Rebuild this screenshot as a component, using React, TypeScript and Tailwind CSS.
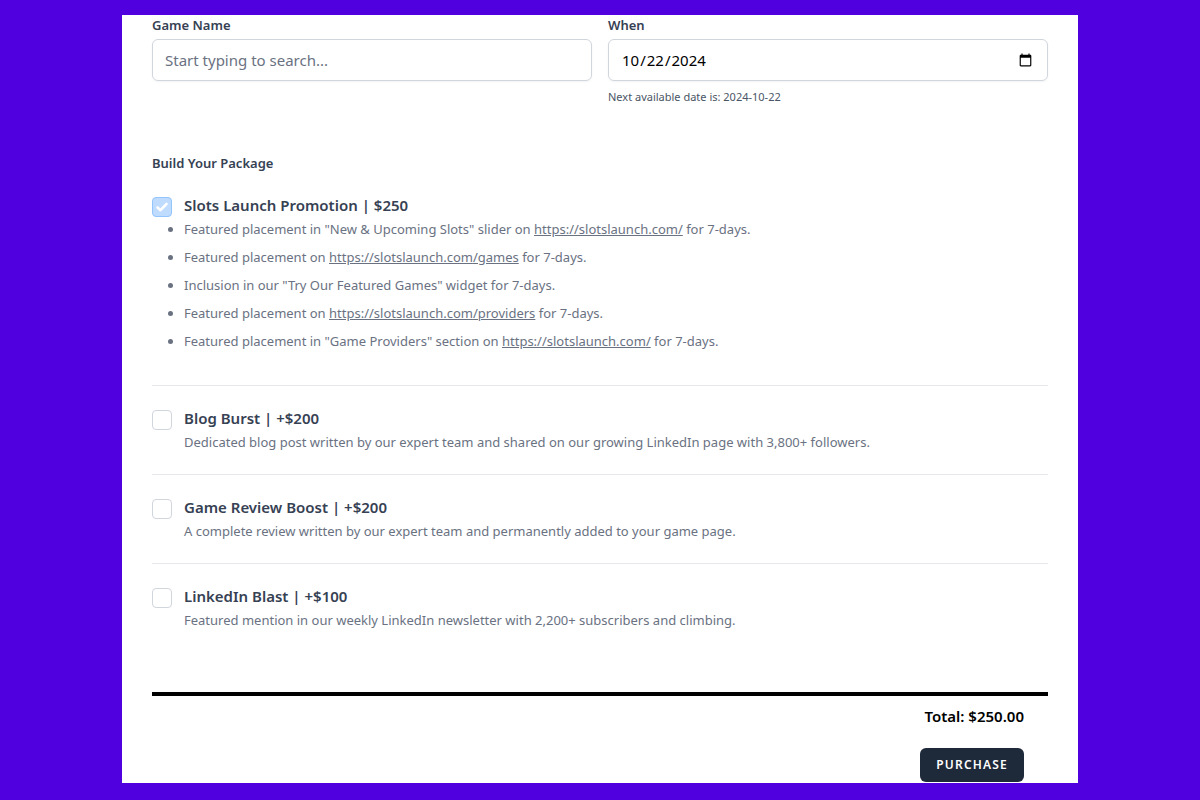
import { ReactNode, useState } from "react";

interface PackageOption {
  id: string;
  title: string;
  price: number;
  required?: boolean;
  details: ReactNode;
}

const SiteLink = ({ path = "/" }: { path?: string }) => (
  <a href={`https://slotslaunch.com${path}`} className="underline">
    https://slotslaunch.com{path}
  </a>
);

const options: PackageOption[] = [
  {
    id: "launch",
    title: "Slots Launch Promotion | $250",
    price: 250,
    required: true,
    details: (
      <ul className="mb-3 list-disc marker:text-gray-500">
        <li className="mb-1">
          Featured placement in "New &amp; Upcoming Slots" slider on <SiteLink /> for 7-days.
        </li>
        <li className="mb-1">
          Featured placement on <SiteLink path="/games" /> for 7-days.
        </li>
        <li className="mb-1">Inclusion in our "Try Our Featured Games" widget for 7-days.</li>
        <li className="mb-1">
          Featured placement on <SiteLink path="/providers" /> for 7-days.
        </li>
        <li className="mb-1">
          Featured placement in "Game Providers" section on <SiteLink /> for 7-days.
        </li>
      </ul>
    ),
  },
  {
    id: "blog",
    title: "Blog Burst | +$200",
    price: 200,
    details: (
      <p>Dedicated blog post written by our expert team and shared on our growing LinkedIn page with 3,800+ followers.</p>
    ),
  },
  {
    id: "review",
    title: "Game Review Boost | +$200",
    price: 200,
    details: <p>A complete review written by our expert team and permanently added to your game page.</p>,
  },
  {
    id: "linkedin",
    title: "LinkedIn Blast | +$100",
    price: 100,
    details: <p>Featured mention in our weekly LinkedIn newsletter with 2,200+ subscribers and climbing.</p>,
  },
];

export default function App() {
  const [game, setGame] = useState("");
  const [date, setDate] = useState("2024-10-22");
  const [selected, setSelected] = useState<string[]>(["launch"]);

  const total = options
    .filter((option) => selected.includes(option.id))
    .reduce((sum, option) => sum + option.price, 0);

  const toggle = (id: string) => {
    setSelected((prev) => (prev.includes(id) ? prev.filter((item) => item !== id) : [...prev, id]));
  };

  return (
    <div className="min-h-screen bg-[#5000df] px-4 py-[15px] font-['Segoe_UI','Noto_Sans',sans-serif]">
      <form
        onSubmit={(event) => event.preventDefault()}
        className="mx-auto w-full max-w-[956px] bg-white px-[30px] pb-px"
      >
        <div className="grid gap-4 sm:grid-cols-2">
          <div>
            <label htmlFor="game" className="block text-[13px] leading-5 font-semibold text-gray-700">
              Game Name
            </label>
            <input
              id="game"
              type="text"
              value={game}
              onChange={(event) => setGame(event.target.value)}
              placeholder="Start typing to search..."
              className="mt-1 block h-[42px] w-full rounded-md border border-gray-300 px-3 text-[15px] shadow-xs placeholder:text-gray-500"
            />
          </div>
          <div>
            <label htmlFor="date" className="block text-[13px] leading-5 font-semibold text-gray-700">
              When
            </label>
            <input
              id="date"
              type="date"
              value={date}
              onChange={(event) => setDate(event.target.value)}
              className="mt-1 block h-[42px] w-full rounded-md border border-gray-300 px-3 text-[15px] text-black shadow-xs"
            />
            <p className="mt-2 text-[11px] leading-4 text-gray-600">Next available date is: 2024-10-22</p>
          </div>
        </div>

        <fieldset className="mt-12">
          <legend className="text-[13px] leading-5 font-semibold text-gray-700">Build Your Package</legend>
          <div className="divide-y divide-gray-200">
            {options.map((option) => (
              <div key={option.id} className="flex items-start gap-3 py-5">
                <span className="mt-1 grid shrink-0">
                  <input
                    id={option.id}
                    type="checkbox"
                    checked={selected.includes(option.id)}
                    disabled={option.required}
                    onChange={() => toggle(option.id)}
                    className="peer col-start-1 row-start-1 size-5 appearance-none rounded-sm border border-gray-300 bg-white checked:border-blue-500 checked:bg-blue-500 disabled:border-[#93c5fd] disabled:bg-[#bfdbfe]"
                  />
                  <svg
                    viewBox="0 0 20 20"
                    className="pointer-events-none invisible col-start-1 row-start-1 size-5 peer-checked:visible"
                    fill="none"
                    stroke="white"
                    strokeWidth="2.6"
                    strokeLinecap="round"
                    strokeLinejoin="round"
                  >
                    <path d="M5.5 10.5 8.5 13.2 14.5 7" />
                  </svg>
                </span>
                <div>
                  <label htmlFor={option.id} className="block text-[15px] leading-6 font-semibold text-gray-700">
                    {option.title}
                  </label>
                  <div className="text-[13px] leading-6 text-gray-500">{option.details}</div>
                </div>
              </div>
            ))}
          </div>
        </fieldset>

        <div className="mt-10 border-t-4 border-black pt-2 pr-6 text-right">
          <p className="text-[15px] leading-6 font-semibold text-black">Total: ${total.toFixed(2)}</p>
          <button
            type="submit"
            className="mt-5 rounded-md bg-gray-800 px-4 py-[9px] text-xs font-semibold tracking-widest text-white uppercase hover:bg-gray-700"
          >
            Purchase
          </button>
        </div>
      </form>
    </div>
  );
}
